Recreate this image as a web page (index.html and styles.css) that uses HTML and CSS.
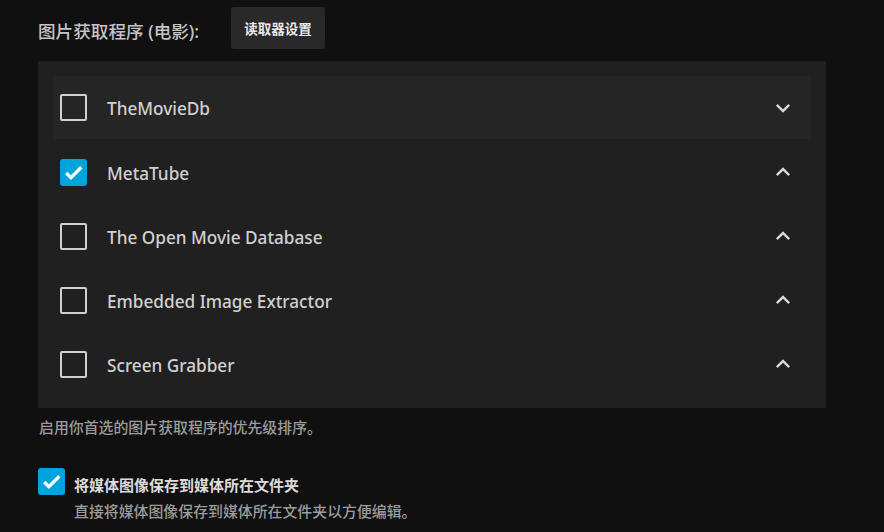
FILE: index.html
```html
<!DOCTYPE html>
<html lang="zh-CN">
<head>
    <meta charset="UTF-8">
    <meta name="viewport" content="width=device-width, initial-scale=1.0">
    <title>图片获取程序</title>
    <link rel="stylesheet" href="styles.css">
</head>
<body>
    <div class="section">
        <div class="section-header">
            <h3>图片获取程序 (电影):</h3>
            <button class="btn-settings" type="button">读取器设置</button>
        </div>

        <div class="fetcher-list">
            <div class="fetcher-item focused">
                <span class="checkbox"></span>
                <span class="fetcher-name">TheMovieDb</span>
                <svg class="chevron" viewBox="0 0 24 24"><path d="M7.41 8.59 12 13.17l4.59-4.58L18 10l-6 6-6-6z"/></svg>
            </div>
            <div class="fetcher-item">
                <span class="checkbox checked"><svg viewBox="0 0 24 24"><path d="M5 12.5l4.5 4.5L19.5 7"/></svg></span>
                <span class="fetcher-name">MetaTube</span>
                <svg class="chevron" viewBox="0 0 24 24"><path d="M7.41 15.41 12 10.83l4.59 4.58L18 14l-6-6-6 6z"/></svg>
            </div>
            <div class="fetcher-item">
                <span class="checkbox"></span>
                <span class="fetcher-name">The Open Movie Database</span>
                <svg class="chevron" viewBox="0 0 24 24"><path d="M7.41 15.41 12 10.83l4.59 4.58L18 14l-6-6-6 6z"/></svg>
            </div>
            <div class="fetcher-item">
                <span class="checkbox"></span>
                <span class="fetcher-name">Embedded Image Extractor</span>
                <svg class="chevron" viewBox="0 0 24 24"><path d="M7.41 15.41 12 10.83l4.59 4.58L18 14l-6-6-6 6z"/></svg>
            </div>
            <div class="fetcher-item">
                <span class="checkbox"></span>
                <span class="fetcher-name">Screen Grabber</span>
                <svg class="chevron" viewBox="0 0 24 24"><path d="M7.41 15.41 12 10.83l4.59 4.58L18 14l-6-6-6 6z"/></svg>
            </div>
        </div>
        <div class="field-description">启用你首选的图片获取程序的优先级排序。</div>
    </div>

    <div class="checkbox-field">
        <span class="checkbox checked"><svg viewBox="0 0 24 24"><path d="M5 12.5l4.5 4.5L19.5 7"/></svg></span>
        <div class="checkbox-text">
            <div class="checkbox-label">将媒体图像保存到媒体所在文件夹</div>
            <div class="field-description">直接将媒体图像保存到媒体所在文件夹以方便编辑。</div>
        </div>
    </div>
</body>
</html>
```

FILE: styles.css
```css
body {
    margin: 0;
    padding: 7px 0 0 38px;
    background: #101010;
    color: rgba(255, 255, 255, 0.8);
    font-family: "Noto Sans", "Noto Sans CJK SC", sans-serif;
}
.section-header {
    display: flex;
    align-items: center;
    height: 42px;
}
.section-header h3 {
    margin: 0 32px 0 0;
    font-size: 17.6px;
    font-weight: 500;
    color: #c4c4c4;
    position: relative;
    top: 2px;
}
.btn-settings {
    width: 94px;
    height: 42px;
    padding: 0;
    border: none;
    border-radius: 3px;
    background: #292929;
    color: #e8e8e8;
    font-family: "Noto Sans CJK SC", sans-serif;
    font-size: 13.5px;
    font-weight: bold;
}
.fetcher-list {
    width: 788px;
    margin-top: 12px;
    padding: 15px 15px 12px;
    box-sizing: border-box;
    background: #202020;
}
.fetcher-item {
    display: flex;
    align-items: center;
    height: 64px;
    padding: 0 14px 0 7px;
}
.fetcher-item.focused {
    height: 63px;
    margin-bottom: 1px;
    background: #252525;
}
.fetcher-name {
    flex: 1;
    margin-left: 20px;
    padding-top: 2px;
    font-size: 17.2px;
    font-weight: 500;
    color: #d0d0d0;
}
.chevron {
    width: 28px;
    height: 28px;
    fill: #d8d8d8;
}
.checkbox {
    display: flex;
    align-items: center;
    justify-content: center;
    width: 27px;
    height: 27px;
    box-sizing: border-box;
    border: 2px solid #d0d0d0;
    border-radius: 2px;
    flex-shrink: 0;
}
.checkbox.checked {
    border: none;
    background: #00a4dc;
    border-radius: 3px;
}
.checkbox svg {
    width: 25px;
    height: 25px;
    fill: none;
    stroke: #fff;
    stroke-width: 3.2;
}
.field-description {
    margin-top: 8px;
    margin-left: 1px;
    font-size: 14.9px;
    font-weight: 500;
    color: #9c9c9c;
    font-family: "Noto Sans CJK SC", sans-serif;
}
.checkbox-field {
    display: flex;
    margin-top: 30px;
}
.checkbox-field .checkbox {
    margin-top: 1px;
}
.checkbox-text {
    margin-left: 9px;
}
.checkbox-label {
    font-family: "Noto Sans CJK SC", sans-serif;
    font-size: 15px;
    font-weight: bold;
    color: #dcdcdc;
    margin-top: 7px;
}
.checkbox-text .field-description {
    margin-top: 5px;
    margin-left: 0;
}
```
